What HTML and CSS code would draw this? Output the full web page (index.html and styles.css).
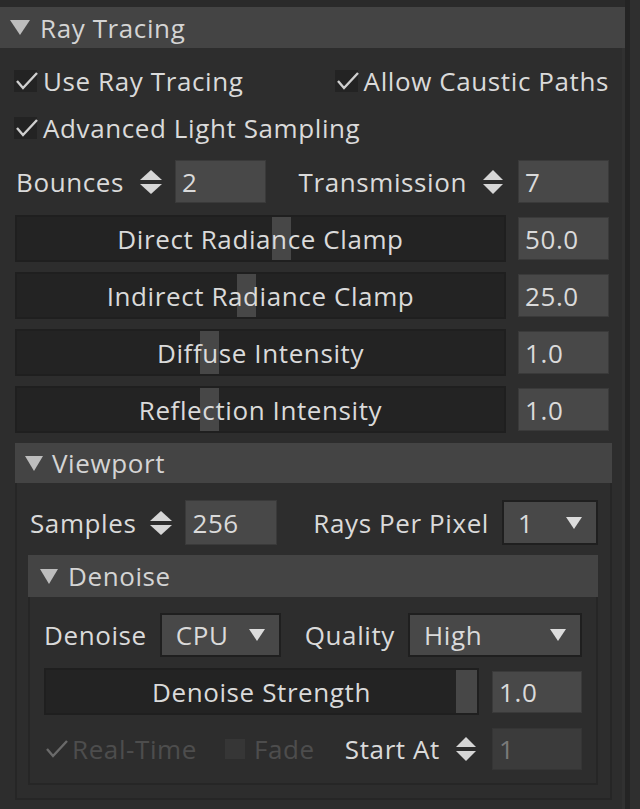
FILE: index.html
```html
<!DOCTYPE html>
<html>
<head>
<meta charset="utf-8">
<link rel="stylesheet" href="styles.css">
</head>
<body>
<div class="window">
  <div class="panel">
    <div class="section-header main-header">
      <svg class="tri" width="20" height="15" viewBox="0 0 20 15"><polygon points="0,0 20,0 10,15"/></svg>
      <span>Ray Tracing</span>
    </div>
    <div class="content">
      <div class="row between check-row r1">
        <label class="check"><span class="box"><svg width="24" height="22" viewBox="0 0 24 22"><polyline points="2,11 8,18 22,3"/></svg></span>Use Ray Tracing</label>
        <label class="check"><span class="box"><svg width="24" height="22" viewBox="0 0 24 22"><polyline points="2,11 8,18 22,3"/></svg></span>Allow Caustic Paths</label>
      </div>
      <div class="row check-row r2">
        <label class="check"><span class="box"><svg width="24" height="22" viewBox="0 0 24 22"><polyline points="2,11 8,18 22,3"/></svg></span>Advanced Light Sampling</label>
      </div>
      <div class="row between spin-row">
        <div class="group g-bounces">
          <span class="lbl">Bounces</span>
          <svg class="spinner" width="24" height="26" viewBox="0 0 24 26"><polygon points="12,1 23,11 1,11"/><polygon points="1,15 23,15 12,25"/></svg>
          <div class="field w91">2</div>
        </div>
        <div class="group g-trans">
          <span class="lbl">Transmission</span>
          <svg class="spinner" width="22" height="26" viewBox="0 0 22 26"><polygon points="11,1 21,11 1,11"/><polygon points="1,15 21,15 11,25"/></svg>
          <div class="field w91">7</div>
        </div>
      </div>
      <div class="row slider-row first">
        <div class="track"><div class="handle" style="left:255px"></div><span class="tlabel">Direct Radiance Clamp</span></div>
        <div class="field w91">50.0</div>
      </div>
      <div class="row slider-row">
        <div class="track"><div class="handle" style="left:220px"></div><span class="tlabel">Indirect Radiance Clamp</span></div>
        <div class="field w91">25.0</div>
      </div>
      <div class="row slider-row">
        <div class="track"><div class="handle" style="left:183px"></div><span class="tlabel">Diffuse Intensity</span></div>
        <div class="field w91">1.0</div>
      </div>
      <div class="row slider-row">
        <div class="track"><div class="handle" style="left:183px"></div><span class="tlabel">Reflection Intensity</span></div>
        <div class="field w91">1.0</div>
      </div>

      <div class="subsection viewport">
        <div class="section-header vp-header">
          <svg class="tri" width="18" height="15" viewBox="0 0 18 15"><polygon points="0,0 18,0 9,15"/></svg>
          <span>Viewport</span>
        </div>
        <div class="sub-body vp-body">
          <div class="row between samples-row">
            <div class="group">
              <span class="lbl">Samples</span>
              <svg class="spinner s-samples" width="24" height="26" viewBox="0 0 24 26"><polygon points="12,1 23,11 1,11"/><polygon points="1,15 23,15 12,25"/></svg>
              <div class="field w92">256</div>
            </div>
            <div class="group">
              <span class="lbl">Rays Per Pixel</span>
              <div class="dropdown w96"><span>1</span><svg width="16" height="12" viewBox="0 0 16 12"><polygon points="0,0 16,0 8,12"/></svg></div>
            </div>
          </div>

          <div class="subsection denoise">
            <div class="section-header dn-header">
              <svg class="tri" width="18" height="15" viewBox="0 0 18 15"><polygon points="0,0 18,0 9,15"/></svg>
              <span>Denoise</span>
            </div>
            <div class="sub-body dn-body">
              <div class="row between dn-row">
                <div class="group">
                  <span class="lbl">Denoise</span>
                  <div class="dropdown w121"><span>CPU</span><svg width="16" height="12" viewBox="0 0 16 12"><polygon points="0,0 16,0 8,12"/></svg></div>
                </div>
                <div class="group">
                  <span class="lbl">Quality</span>
                  <div class="dropdown w174"><span>High</span><svg width="16" height="12" viewBox="0 0 16 12"><polygon points="0,0 16,0 8,12"/></svg></div>
                </div>
              </div>
              <div class="row slider-row strength-row">
                <div class="track"><div class="handle end" style="right:0"></div><span class="tlabel">Denoise Strength</span></div>
                <div class="field w90">1.0</div>
              </div>
              <div class="row between last-row">
                <div class="group">
                  <label class="check disabled"><span class="box"><svg width="24" height="22" viewBox="0 0 24 22"><polyline points="2,11 8,18 22,3"/></svg></span>Real-Time</label>
                  <label class="check disabled fade"><span class="box empty"></span>Fade</label>
                </div>
                <div class="group">
                  <span class="lbl">Start At</span>
                  <svg class="spinner s-start" width="22" height="26" viewBox="0 0 22 26"><polygon points="11,1 21,11 1,11"/><polygon points="1,15 21,15 11,25"/></svg>
                  <div class="field w90 dis">1</div>
                </div>
              </div>
            </div>
          </div>
        </div>
      </div>
    </div>
  </div>
  <div class="gutter"><div class="gutter-line"></div></div>
</div>
</body>
</html>
```

FILE: styles.css
```css
* { box-sizing: border-box; }

html, body {
  margin: 0;
  padding: 0;
}

body {
  background: #2a2a2a;
  font-family: "Open Sans", "DejaVu Sans", sans-serif;
  font-size: 26px;
  font-weight: 500;
  letter-spacing: 0.6px;
  color: #dadada;
  width: 640px;
  height: 809px;
  overflow: hidden;
}

.window {
  display: flex;
  height: 809px;
}

.panel {
  width: 625px;
  margin-top: 7px;
  background: #2d2d2d;
  border-right: 3px solid #313131;
}

.gutter {
  flex: 1;
  display: flex;
  background: #2f2f2f;
}

.gutter-line {
  width: 5px;
  background: #242424;
}

.section-header {
  display: flex;
  align-items: center;
  background: #444444;
  color: #d4d4d4;
  white-space: nowrap;
}

.tri polygon { fill: #bdbdbd; }

.main-header {
  height: 41px;
  padding-left: 10px;
  margin-right: -3px;
}

.main-header .tri { margin-right: 10px; }

.content {
  padding: 0 13px 0 14px;
}

.row {
  display: flex;
  align-items: center;
  white-space: nowrap;
}

.between { justify-content: space-between; }

.group {
  display: flex;
  align-items: center;
}

.r1 { margin-top: 15px; height: 36px; }
.r2 { margin-top: 11px; height: 36px; }

.check {
  display: flex;
  align-items: center;
}

.box {
  width: 23px;
  height: 22px;
  background: #232323;
  margin-right: 6px;
  position: relative;
  flex: none;
}

.box svg {
  position: absolute;
  left: 1px;
  top: 0;
}

.box polyline {
  fill: none;
  stroke: #cfcfcf;
  stroke-width: 2.4;
}

.spin-row { margin-top: 14px; height: 43px; }

.g-bounces { margin-left: 2px; }
.g-bounces .spinner { margin: 0 12px 0 15px; }
.g-trans .spinner { margin: 0 14px 0 15px; }

.spinner polygon { fill: #d6d6d6; }

.field {
  height: 43px;
  background: #484848;
  border: 1px solid #3a3a3a;
  display: flex;
  align-items: center;
  padding-left: 6px;
  color: #dadada;
  flex: none;
}

.w90 { width: 90px; }
.w91 { width: 91px; }
.w92 { width: 92px; }

.slider-row { margin-top: 10px; height: 47px; }
.slider-row.first { margin-top: 12px; }

.track {
  flex: 1;
  height: 47px;
  margin-left: 1px;
  margin-right: 12px;
  background: #232323;
  border: 2px solid #1f1f1f;
  position: relative;
  display: flex;
  align-items: center;
  justify-content: center;
}

.handle {
  position: absolute;
  top: 0;
  bottom: 0;
  width: 19px;
  background: #474747;
}

.handle.end { width: 21px; }

.tlabel {
  position: relative;
  color: #dadada;
}

.subsection { display: flex; flex-direction: column; }

.viewport {
  margin: 10px -3px 0 1px;
}

.vp-header {
  height: 40px;
  padding-left: 10px;
}

.vp-header .tri { margin-right: 9px; }

.sub-body {
  border: 2px solid #262626;
  border-top: none;
}

.vp-body {
  padding: 0 12px 13px 13px;
}

.samples-row { margin-top: 17px; height: 45px; }
.samples-row .field { height: 45px; }
.s-samples { margin: 0 12px 0 13px; }

.dropdown {
  height: 45px;
  background: #484848;
  border: 2px solid #1f1f1f;
  display: flex;
  align-items: center;
  justify-content: space-between;
  padding: 0 14px 0 14px;
  margin-left: 13px;
  color: #dadada;
  flex: none;
}

.dropdown polygon { fill: #dcdcdc; }

.w96 { width: 96px; }
.w121 { width: 121px; }
.w174 { width: 174px; }

.denoise {
  margin: 10px 0 0 -2px;
}

.dn-header {
  height: 42px;
  padding-left: 12px;
}

.dn-header .tri { margin-right: 10px; }

.dn-body {
  padding: 0 14px 13px 14px;
}

.dn-row { margin-top: 16px; height: 44px; }
.dn-row .dropdown { height: 44px; }

.strength-row { margin-top: 11px; }
.strength-row .track { margin-left: 0; margin-right: 13px; }
.strength-row .field { height: 42px; }

.last-row { margin-top: 13px; height: 42px; }

.check.disabled { color: #4d4d4d; }
.check.disabled .box { background: #2d2d2d; margin-right: 5px; }
.check.disabled polyline { stroke: #6a6a6a; }
.check.fade { margin-left: 28px; }
.check.disabled .box.empty {
  width: 20px;
  height: 20px;
  background: #363636;
  margin-right: 9px;
}

.s-start { margin: 0 15px 0 15px; }

.field.dis {
  background: #3b3b3b;
  border-color: #353535;
  color: #7a7a7a;
  height: 42px;
}
```
